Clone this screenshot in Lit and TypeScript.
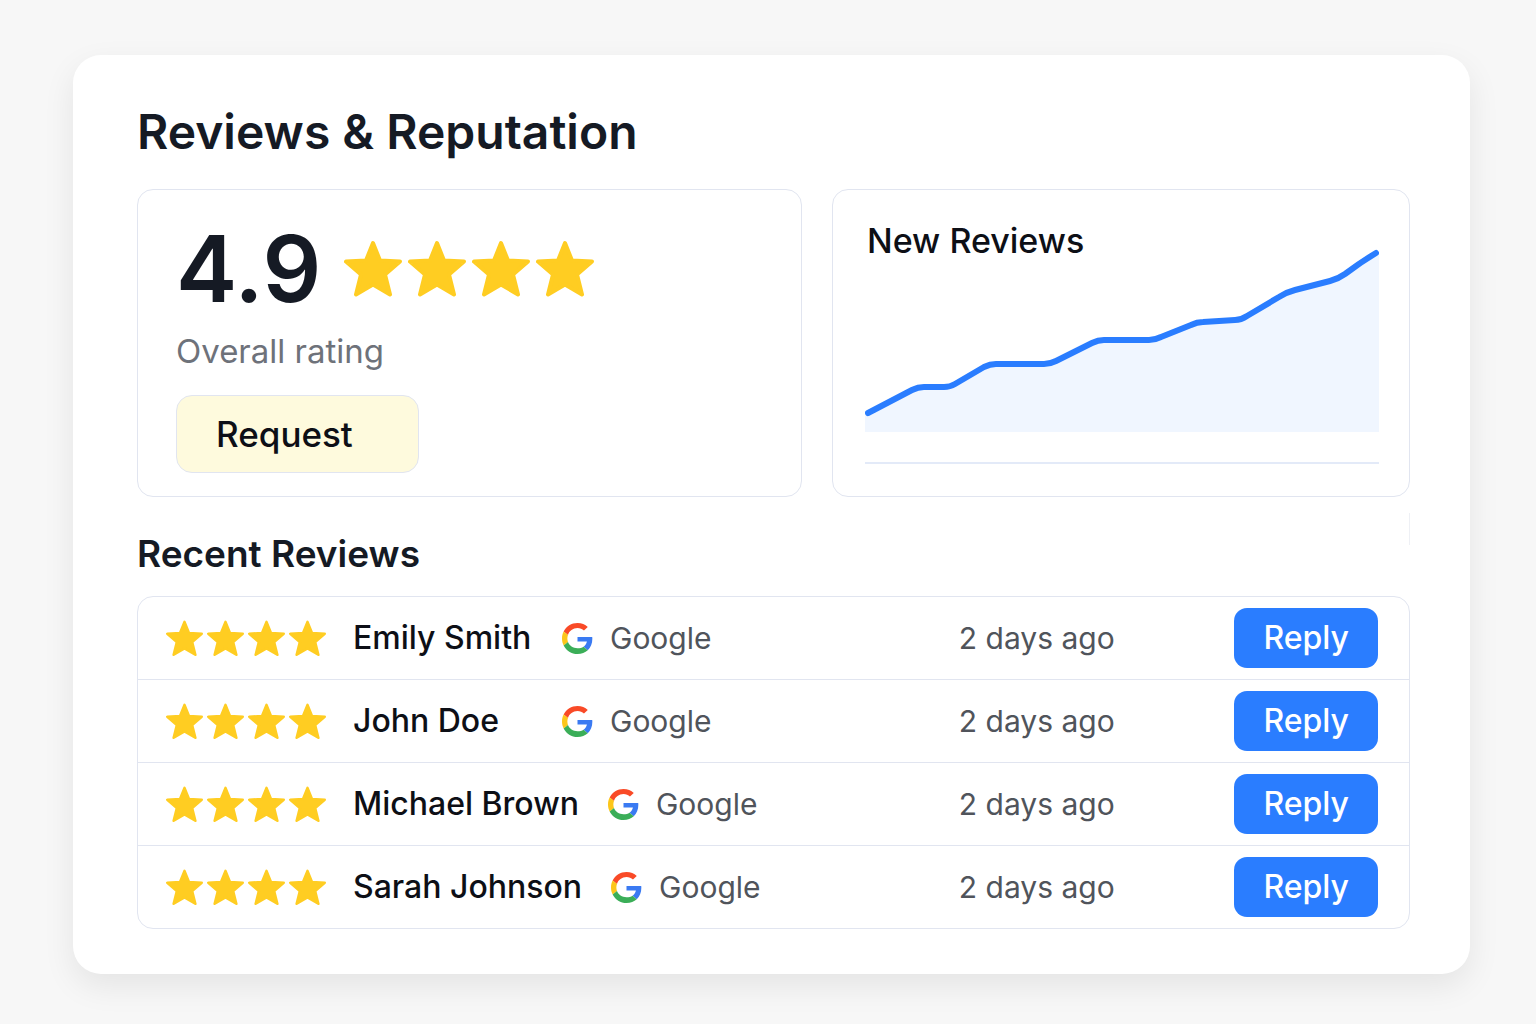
import { LitElement, html, svg, css } from "lit";
import { customElement, property } from "lit/decorators.js";

interface Review {
  name: string;
  source: string;
  when: string;
  stars: number;
}

const REVIEWS: Review[] = [
  { name: "Emily Smith", source: "Google", when: "2 days ago", stars: 4 },
  { name: "John Doe", source: "Google", when: "2 days ago", stars: 4 },
  { name: "Michael Brown", source: "Google", when: "2 days ago", stars: 4 },
  { name: "Sarah Johnson", source: "Google", when: "2 days ago", stars: 4 },
];

@customElement("star-row")
export class StarRow extends LitElement {
  @property({ type: Number }) count = 4;

  static styles = css`
    :host {
      display: flex;
      gap: var(--star-gap, 4px);
    }
    .star {
      display: block;
      width: var(--star-size, 37px);
      height: var(--star-size, 37px);
      fill: #ffcd22;
      stroke: #ffcd22;
      stroke-width: 4;
      stroke-linejoin: round;
    }
  `;

  render() {
    return Array.from(
      { length: this.count },
      () => html`<svg class="star" viewBox="0 0 58 58" aria-hidden="true">
        <path d="M29 3 L36 20.5 L56 21.5 L41 34.5 L46 54.5 L29 44.5 L12 54.5 L17 34.5 L2 21.5 L22 20.5 Z" />
      </svg>`
    );
  }
}

@customElement("google-mark")
export class GoogleMark extends LitElement {
  static styles = css`
    :host {
      display: block;
    }
    .mark {
      display: block;
      width: 31px;
      height: 31px;
    }
  `;

  render() {
    return html`<svg class="mark" viewBox="0 0 48 48" aria-hidden="true">
      <path fill="#f94a27" d="M24 7.8c4 0 7.3 1.3 10 3.9l5.9-5.6C35.9 2.38 30.47 0 24 0 14.62 0 6.51 5.38 2.56 13.22l6.7 5.2C11.3 12.3 17.1 7.8 24 7.8z" />
      <path fill="#3a7af2" d="M46.98 24.55c0-1.2-.05-2.1-.18-3.05H24v7.2h14.6c-.7 3.4-2.6 6.1-5.3 8l6.59 5.5c4.51-4.18 7.09-10.36 7.09-17.65z" />
      <path fill="#fcc61a" d="M9.26 29.58c-.6-1.75-.96-3.6-.96-5.58s.36-3.83.96-5.58l-6.7-5.2C.92 16.46 0 20.12 0 24c0 3.88.92 7.54 2.56 10.78l6.7-5.2z" />
      <path fill="#3bae58" d="M24 48c6.48 0 11.93-2.13 15.89-5.81l-6.59-5.49c-2.4 1.6-5.5 2.5-9.3 2.5-6.9 0-12.7-3.9-14.74-9.62l-6.7 5.2C6.51 42.62 14.62 48 24 48z" />
    </svg>`;
  }
}

const TREND =
  "M3 165 L47 142 Q53 139 59 139 L79 139 Q85 139 90 136 L119 119 Q125 116 131 116 L179 116 Q185 116 191 113 L227 95 Q233 92 239 92 L284 92 Q290 92 296 89 L326 77 Q332 74 338 74 L370 72 Q376 72 382 68 L414 49 Q422 44 430 42 L465 33 Q473 31 480 26 Q496 14 511 5";

@customElement("trend-chart")
export class TrendChart extends LitElement {
  static styles = css`
    :host {
      display: block;
    }
    .chart {
      display: block;
      width: 100%;
      height: auto;
    }
    .area {
      fill: #f0f6ff;
    }
    .line {
      fill: none;
      stroke: #2a7dff;
      stroke-width: 6;
      stroke-linecap: round;
      stroke-linejoin: round;
    }
    .axis {
      stroke: #e3eaf8;
      stroke-width: 2;
    }
  `;

  render() {
    return html`<svg class="chart" viewBox="0 0 514 216" role="img" aria-label="New Reviews">
      ${svg`
        <path class="area" d="${TREND} L514 5 L514 184 L0 184 L0 165 Z" />
        <path class="line" d=${TREND} />
        <path class="axis" d="M0 215 H514" />
      `}
    </svg>`;
  }
}

@customElement("review-item")
export class ReviewItem extends LitElement {
  @property({ attribute: false }) review!: Review;

  static styles = css`
    :host {
      display: grid;
      grid-template-columns: 160px minmax(0, 58fr) minmax(0, 42fr);
      align-items: center;
      column-gap: 27px;
      min-height: 82px;
      padding: 0 31px 0 28px;
      white-space: nowrap;
    }
    .author {
      display: flex;
      align-items: center;
      gap: 29px;
    }
    .name {
      min-width: 180px;
      font-size: 32px;
      font-weight: 500;
      line-height: 40px;
      color: #0d0f16;
    }
    .source {
      display: flex;
      align-items: center;
      gap: 17px;
      font-size: 30px;
      line-height: 40px;
      color: #50545b;
    }
    .end {
      display: flex;
      align-items: center;
      justify-content: space-between;
    }
    .when {
      font-size: 30px;
      line-height: 40px;
      color: #50545b;
    }
    .reply {
      padding: 10px 29px;
      border: 0;
      border-radius: 13px;
      background: #2a7dff;
      color: #fff;
      font: 500 32px/40px Inter, "Liberation Sans", sans-serif;
      cursor: pointer;
    }
  `;

  render() {
    const r = this.review;
    return html`
      <star-row .count=${r.stars}></star-row>
      <div class="author">
        <span class="name">${r.name}</span>
        <span class="source"><google-mark></google-mark>${r.source}</span>
      </div>
      <div class="end">
        <span class="when">${r.when}</span>
        <button class="reply" type="button">Reply</button>
      </div>
    `;
  }
}

@customElement("app-root")
export class AppRoot extends LitElement {
  static styles = css`
    :host {
      display: block;
      box-sizing: border-box;
      min-height: 100vh;
      padding: 55px 66px 50px 73px;
      background: #f7f7f7;
      color: #151a24;
      font-family: Inter, "Liberation Sans", sans-serif;
    }
    .panel {
      padding: 47px 60px 45px 64px;
      border-radius: 28px;
      background: #fff;
      box-shadow: 0 12px 32px rgba(0, 0, 0, 0.08);
    }
    .title {
      margin: 0 0 27px;
      font-size: 48px;
      font-weight: 600;
      line-height: 60px;
    }
    .summary {
      display: grid;
      grid-template-columns: 665fr 578fr;
      gap: 30px;
    }
    .card {
      box-sizing: border-box;
      border: 1px solid #e1e5f0;
      border-radius: 16px;
    }
    .rating {
      display: flex;
      flex-direction: column;
      align-items: flex-start;
      padding: 31px 38px 22px;
    }
    .score {
      display: flex;
      align-items: center;
      gap: 23px;
      --star-size: 58px;
      --star-gap: 6px;
    }
    .value {
      font-size: 92px;
      font-weight: 600;
      line-height: 96px;
    }
    .caption {
      margin: 14px 0 24px;
      font-size: 33px;
      line-height: 40px;
      color: #6e727a;
    }
    .request {
      min-width: 243px;
      padding: 18px 39px;
      border: 1px solid #e1e5f0;
      border-radius: 16px;
      background: #fefadd;
      color: #0d0f16;
      font: 500 35px/40px Inter, "Liberation Sans", sans-serif;
      text-align: left;
      cursor: pointer;
    }
    .trend {
      display: grid;
      align-content: end;
      padding: 31px 30px 32px 32px;
    }
    .trend > * {
      grid-area: 1 / 1;
    }
    .subtitle {
      margin: 0;
      padding-left: 2px;
      font-size: 34px;
      font-weight: 500;
      line-height: 40px;
      color: #0d0f16;
    }
    .plot {
      padding-top: 27px;
    }
    .recent {
      display: flex;
      justify-content: space-between;
      margin: 16px 0 20px;
    }
    .heading {
      margin: 19px 0 0;
      font-size: 37px;
      font-weight: 600;
      line-height: 44px;
    }
    .rule {
      width: 1px;
      height: 32px;
      background: #eef0f5;
    }
    .list {
      margin: 0;
      padding: 0;
      list-style: none;
    }
    .row + .row {
      border-top: 1px solid #e1e5f0;
    }
  `;

  render() {
    return html`
      <main class="panel">
        <h1 class="title">Reviews &amp; Reputation</h1>
        <div class="summary">
          <section class="card rating">
            <div class="score">
              <span class="value">4.9</span>
              <star-row .count=${4}></star-row>
            </div>
            <p class="caption">Overall rating</p>
            <button class="request" type="button">Request</button>
          </section>
          <section class="card trend">
            <h2 class="subtitle">New Reviews</h2>
            <trend-chart class="plot"></trend-chart>
          </section>
        </div>
        <div class="recent">
          <h2 class="heading">Recent Reviews</h2>
          <span class="rule"></span>
        </div>
        <ul class="card list">
          ${REVIEWS.map(
            (r) => html`<li class="row"><review-item .review=${r}></review-item></li>`
          )}
        </ul>
      </main>
    `;
  }
}
